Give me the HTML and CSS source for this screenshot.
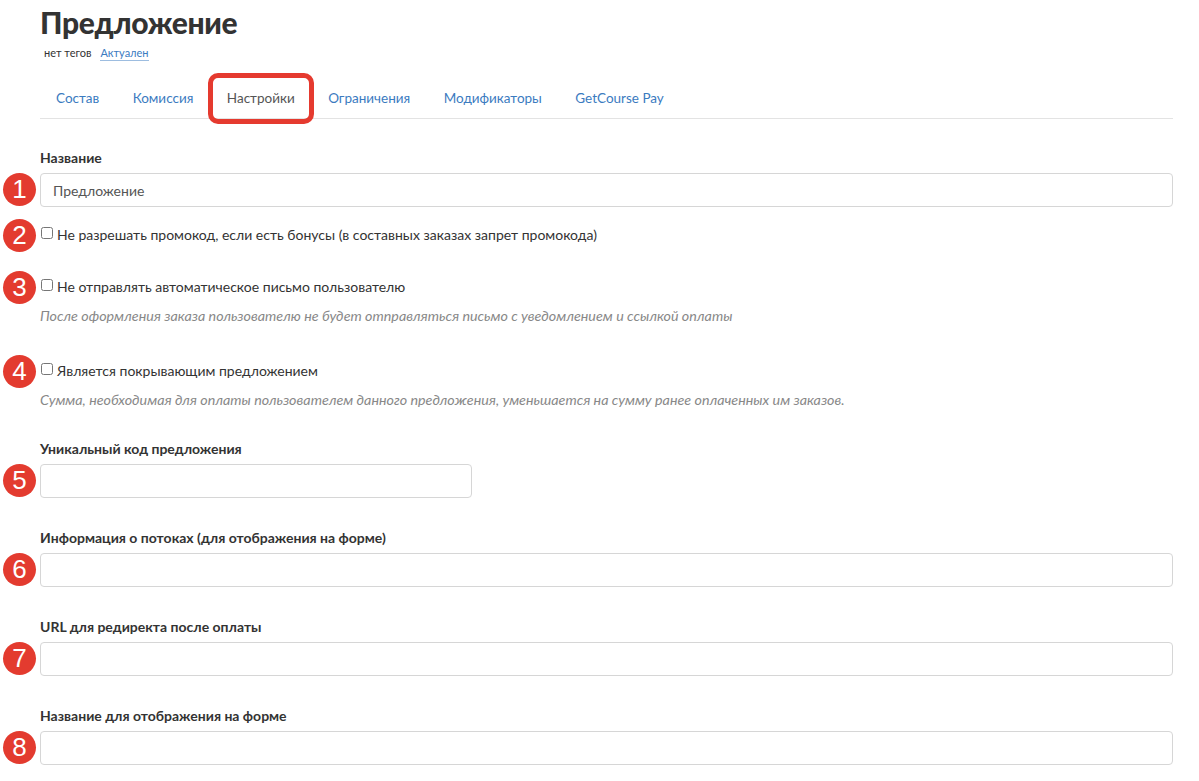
FILE: index.html
```html
<!DOCTYPE html>
<html lang="ru">
<head>
<meta charset="utf-8">
<title>Предложение</title>
<link rel="stylesheet" href="styles.css">
</head>
<body>
<div class="page">
  <h1 class="title">Предложение</h1>
  <div class="meta"><span class="tags">нет тегов</span><a class="status">Актуален</a></div>
  <nav class="tabs">
    <a class="tab">Состав</a>
    <a class="tab">Комиссия</a>
    <a class="tab active">Настройки</a>
    <a class="tab">Ограничения</a>
    <a class="tab">Модификаторы</a>
    <a class="tab">GetCourse Pay</a>
  </nav>

  <div class="field f-name">
    <div class="label">Название</div>
    <div class="control"><span class="badge">1</span><input class="input" type="text" value="Предложение"></div>
  </div>

  <div class="check c2"><span class="badge">2</span><label><input type="checkbox" class="cb"> Не разрешать промокод, если есть бонусы (в составных заказах запрет промокода)</label></div>

  <div class="check c3"><span class="badge">3</span><label><input type="checkbox" class="cb"> Не отправлять автоматическое письмо пользователю</label></div>
  <div class="help">После оформления заказа пользователю не будет отправляться письмо с уведомлением и ссылкой оплаты</div>

  <div class="check c4"><span class="badge">4</span><label><input type="checkbox" class="cb"> Является покрывающим предложением</label></div>
  <div class="help">Сумма, необходимая для оплаты пользователем данного предложения, уменьшается на сумму ранее оплаченных им заказов.</div>

  <div class="field f-code">
    <div class="label">Уникальный код предложения</div>
    <div class="control narrow"><span class="badge">5</span><input class="input" type="text"></div>
  </div>

  <div class="field">
    <div class="label">Информация о потоках (для отображения на форме)</div>
    <div class="control"><span class="badge">6</span><input class="input" type="text"></div>
  </div>

  <div class="field">
    <div class="label">URL для редиректа после оплаты</div>
    <div class="control"><span class="badge">7</span><input class="input" type="text"></div>
  </div>

  <div class="field">
    <div class="label">Название для отображения на форме</div>
    <div class="control"><span class="badge">8</span><input class="input" type="text"></div>
  </div>
</div>
</body>
</html>
```

FILE: styles.css
```css
html, body {
  margin: 0;
  padding: 0;
  background: #fff;
}
body {
  font-family: "Lato", "Open Sans", "Liberation Sans", sans-serif;
  color: #333;
  font-size: 14px;
}
.page {
  padding: 4px 26px 0 40px;
}
.title {
  margin: 0;
  font-size: 30px;
  letter-spacing: -0.3px;
  line-height: 36px;
  font-weight: 900;
  color: #333;
}
.meta {
  margin-top: 6px;
  padding-left: 4px;
  font-size: 11px;
  line-height: 14px;
  display: flex;
  gap: 9px;
}
.tags { color: #333; }
.status {
  color: #3b7bbf;
  border-bottom: 1px solid #9dbde0;
}
.tabs {
  margin-top: 15px;
  display: flex;
  border-bottom: 1px solid #e3e3e3;
  height: 42px;
  align-items: flex-start;
}
.tab {
  position: relative;
  padding: 12px 16px 0;
  color: #3b7bbf;
  font-size: 13.5px;
  line-height: 20px;
  height: 42px;
  box-sizing: border-box;
  margin-right: 1.5px;
}
.tab.active {
  color: #555;
}
.tab.active::after {
  content: "";
  position: absolute;
  left: -3px;
  right: -3px;
  top: -3px;
  bottom: -6px;
  border: 5px solid #e53a2f;
  border-radius: 10px;
}
.field {
  margin-top: 32px;
}
.f-name {
  margin-top: 31px;
}
.label {
  font-weight: 700;
  font-size: 14px;
  line-height: 16px;
  margin-bottom: 7px;
}
.control {
  position: relative;
}
.control.narrow {
  width: 432px;
}
.input {
  display: block;
  width: 100%;
  box-sizing: border-box;
  height: 34px;
  border: 1px solid #d6d6d6;
  border-radius: 4px;
  padding: 0 12px;
  font-family: inherit;
  font-size: 14px;
  color: #555;
  background: #fff;
}
.badge {
  position: absolute;
  left: -37px;
  top: 0;
  width: 33px;
  height: 33px;
  border-radius: 50%;
  background: #e33b2f;
  color: #fff;
  font-family: "Liberation Sans", Arial, sans-serif;
  font-size: 26px;
  line-height: 33px;
  text-align: center;
  font-weight: 400;
}
.check {
  position: relative;
  line-height: 20px;
  font-size: 14px;
}
.check .badge {
  top: -6px;
}
.c2 { margin-top: 18px; }
.c3 { margin-top: 32px; }
.c4 { margin-top: 36px; }
.check label {
  display: flex;
  align-items: center;
  gap: 4px;
}
.cb {
  margin: 0 0 0 1px;
  width: 12px;
  height: 12px;
  position: relative;
  top: -2px;
}
.help {
  margin-top: 10px;
  font-style: italic;
  color: #888;
  font-size: 14.3px;
  line-height: 18px;
}
.f-code { margin-top: 32px; }
```
